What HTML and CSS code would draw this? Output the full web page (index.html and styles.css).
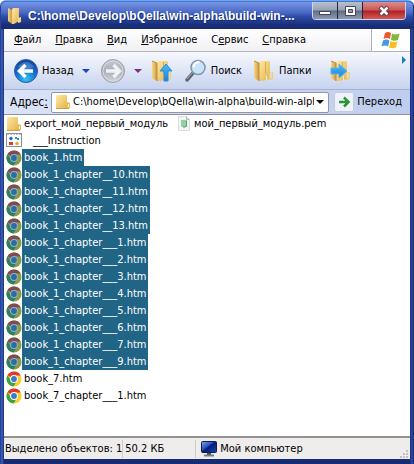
FILE: index.html
```html
<!DOCTYPE html>
<html lang="ru">
<head>
<meta charset="utf-8">
<title>C:\home\Develop\bQella\win-alpha\build-win-...</title>
<link rel="stylesheet" href="styles.css">
</head>
<body>
<svg class="defs" aria-hidden="true">
  <defs>
    <linearGradient id="gold" x1="0" y1="0" x2="1" y2="1"><stop offset="0" stop-color="#ffe9a3"/><stop offset="1" stop-color="#e3b34d"/></linearGradient>
    <linearGradient id="goldDark" x1="0" y1="0" x2="1" y2="0"><stop offset="0" stop-color="#f8d981"/><stop offset="1" stop-color="#c99a45"/></linearGradient>
    <radialGradient id="blue" cx=".5" cy=".85" r=".85"><stop offset="0" stop-color="#35c3f5"/><stop offset=".5" stop-color="#1674cf"/><stop offset="1" stop-color="#123f9c"/></radialGradient>
    <linearGradient id="grey" x1="0" y1="0" x2="0" y2="1"><stop offset="0" stop-color="#c9ccd3"/><stop offset=".5" stop-color="#a9adb5"/><stop offset="1" stop-color="#d5d8de"/></linearGradient>
    <linearGradient id="sky" x1="0" y1="0" x2="0" y2="1"><stop offset="0" stop-color="#52baf7"/><stop offset="1" stop-color="#1683d8"/></linearGradient>
    <linearGradient id="screen" x1="0" y1="0" x2="1" y2="1"><stop offset="0" stop-color="#7fa6ee"/><stop offset=".4" stop-color="#2a55c4"/><stop offset=".5" stop-color="#08197a"/><stop offset="1" stop-color="#1c49b5"/></linearGradient>
    <symbol id="folder" viewBox="0 0 16 16">
      <path d="M1 2q0-1 1-1h9q1 0 1 1v13H2q-1 0-1-1z" fill="url(#gold)"/>
      <path d="M12 8l3 1v5l-3 1z" fill="#e6bb58"/>
      <path d="M13 10h1v3h-1z" fill="#fff8dc"/>
      <path d="M1 14.500h13" stroke="#cda04b"/>
    </symbol>
    <symbol id="open-folder" viewBox="0 0 24 24">
      <path d="M2 2l5 2v18l-5-3z" fill="url(#goldDark)"/>
      <path d="M7 4l1-2h9l1 1v17l-8 2H7z" fill="url(#gold)"/>
      <path d="M2 2l5 2v18" fill="none" stroke="#bd8d3c"/>
      <path d="M13.500 3v12" stroke="#dcae53"/>
      <path d="M17 14l4-1v7l-4 1z" fill="#efcb72"/>
      <path d="M14.500 17v4M19 14v5" stroke="#d5f0fb"/>
    </symbol>
    <symbol id="chrome" viewBox="0 0 16 16">
      <circle cx="8" cy="8" r="7.500" fill="#f7cf27"/>
      <path d="M8 8L1.500 4.250A7.500 7.500 0 0 1 14.700 4.600H8z" fill="#e1392d"/>
      <path d="M1.500 4.250A7.500 7.500 0 0 0 7.500 15.500L11 9.700 8 8 5 9.700z" fill="#35a44a"/>
      <circle cx="8" cy="8" r="3.900" fill="#fff"/>
      <circle cx="8" cy="8" r="2.900" fill="#3c79c9"/>
    </symbol>
    <symbol id="chrome-selected" viewBox="0 0 16 16">
      <circle cx="8" cy="8" r="7.500" fill="#8b9a45"/>
      <path d="M8 8L1.500 4.250A7.500 7.500 0 0 1 14.700 4.600H8z" fill="#804b50"/>
      <path d="M1.500 4.250A7.500 7.500 0 0 0 7.500 15.500L11 9.700 8 8 5 9.700z" fill="#2b8060"/>
      <circle cx="8" cy="8" r="3.900" fill="#91b3c5"/>
      <circle cx="8" cy="8" r="2.900" fill="#2b6ca8"/>
    </symbol>
  </defs>
</svg>
<div class="window">
  <header class="title">
    <svg class="title-icon" viewBox="0 0 16 20"><path d="M2 2l4 2v14l-4-3z" fill="url(#goldDark)"/><path d="M6 4l1-2h6v13l-5 3-2 0z" fill="url(#gold)"/><path d="M12 12l3-1v5l-3 1z" fill="#f3d78b"/></svg>
    <h1>C:\home\Develop\bQella\win-alpha\build-win-...</h1>
    <div class="caption">
      <button type="button" aria-label="Свернуть"><svg viewBox="0 0 24 16"><rect x="6.500" y="8.500" width="11" height="3" fill="#fff" stroke="#424656"/></svg></button>
      <button type="button" aria-label="Развернуть"><svg viewBox="0 0 24 16"><path d="M7.500 3.500h10v9h-10z" fill="#fff" stroke="#424656"/><path d="M10.500 6.500h4v3h-4z" fill="#8d9db5" stroke="#424656"/></svg></button>
      <button type="button" class="close" aria-label="Закрыть"><svg viewBox="0 0 32 16"><path d="M12 4l8 8M20 4l-8 8" stroke="#5b3340" stroke-width="4.500"/><path d="M12.500 4.500l7 7M19.500 4.500l-7 7" stroke="#fff" stroke-width="2.500"/></svg></button>
    </div>
  </header>
  <main class="content">
    <nav class="menu">
      <a href="#"><u>Ф</u>айл</a>
      <a href="#"><u>П</u>равка</a>
      <a href="#"><u>В</u>ид</a>
      <a href="#"><u>И</u>збранное</a>
      <a href="#">С<u>е</u>рвис</a>
      <a href="#"><u>С</u>правка</a>
      <span class="brand"><svg viewBox="0 0 20 18">
        <path d="M4 2q3-2 6 0L9 8Q6 6 2.500 8z" fill="#ee5a25"/>
        <path d="M11 2.500q3 2 7.500 0L17 9q-4 1.500-7 0z" fill="#83b93b"/>
        <path d="M2 9.500q3-2 6.500 0L7 15.500q-3-2-6.500 0z" fill="#4298e6"/>
        <path d="M9.500 10q3 2 7 0.500L15 16.500q-4 1.500-7 0z" fill="#f7bf22"/>
      </svg></span>
    </nav>
    <div class="toolbar">
      <button type="button" class="tool back"><svg class="round" viewBox="0 0 26 26"><circle cx="13" cy="13" r="11.500" fill="url(#blue)" stroke="#2f5da5"/><path d="M5 9Q13-1 21 9 13 13 5 9z" fill="#fff" opacity=".2"/><path d="M12.500 7L6.500 13l6 6M7.500 13H20" fill="none" stroke="#fff" stroke-width="3.500"/></svg><span>Назад</span></button>
      <button type="button" class="drop" aria-label="История назад"><svg viewBox="0 0 8 6"><path d="M0 1h8L4 5z" fill="#1b43c8"/></svg></button>
      <button type="button" class="tool forward" aria-label="Вперед"><svg class="round" viewBox="0 0 26 26"><circle cx="13" cy="13" r="11.500" fill="url(#grey)" stroke="#9da1aa"/><circle cx="13" cy="13" r="10" fill="none" stroke="#d8dade"/><path d="M13.500 7l6 6-6 6M18.500 13H6" fill="none" stroke="#f0f2f5" stroke-width="3.500"/></svg></button>
      <button type="button" class="drop" aria-label="История вперед"><svg viewBox="0 0 8 6"><path d="M0 1h8L4 5z" fill="#803080"/></svg></button>
      <button type="button" class="tool up" aria-label="Вверх"><svg class="large" viewBox="0 0 24 24"><use href="#open-folder"/><path d="M16 5l6 7h-4v10h-4V12h-4z" fill="url(#sky)" stroke="#2a8ed8"/></svg></button>
      <button type="button" class="tool search"><svg class="large" viewBox="0 0 24 24"><path d="M9 14l-6 7" stroke="#62676f" stroke-width="3.500" stroke-linecap="round"/><path d="M9 13l-6 7" stroke="#a9adb4"/><circle cx="14" cy="8.500" r="7" fill="#c9e4f8" stroke="#8394ab" stroke-width="1.500"/><path d="M9.500 8q1-5 6-5" fill="none" stroke="#fff" stroke-width="2"/></svg><span>Поиск</span></button>
      <button type="button" class="tool folders"><svg class="large" viewBox="0 0 24 24"><use href="#open-folder"/></svg><span>Папки</span></button>
      <button type="button" class="tool sync" aria-label="Переместить"><svg class="large" viewBox="0 0 24 24"><use href="#open-folder"/><path d="M2 9h8V5l8 7-8 7v-4H2z" fill="url(#sky)" stroke="#5ab3ed"/></svg></button>
      <button type="button" class="more" aria-label="Еще"><svg viewBox="0 0 4 8"><path d="M0 0l4 4-4 4z" fill="#197cc9"/></svg></button>
    </div>
    <form class="address">
      <label for="path">Адрес<u>:</u></label>
      <div class="combo">
        <svg class="icon"><use href="#folder"/></svg>
        <input id="path" type="text" value="C:\home\Develop\bQella\win-alpha\build-win-alph">
        <button type="button" class="open" aria-label="Открыть список"><svg viewBox="0 0 8 6"><path d="M0 1h8L4 5z" fill="#111"/></svg></button>
      </div>
      <button type="button" class="go"><svg viewBox="0 0 20 20"><rect x=".5" y=".5" width="19" height="19" rx="2" fill="#eef3fb" stroke="#c3cbdc"/><path d="M5 10h9M10 5.500l4.500 4.500-4.500 4.500" fill="none" stroke="#2c9632" stroke-width="2.500"/></svg><span>Переход</span></button>
    </form>
    <ul class="files">
      <li><svg class="icon"><use href="#folder"/></svg><span>export_мой_первый_модуль</span></li>
      <li><svg class="icon" viewBox="0 0 16 16"><rect x=".5" y=".5" width="15" height="13" fill="#fff" stroke="#8b8f98"/><path d="M1 1.500h14" stroke="#b9c3d8" stroke-dasharray="2 1"/><circle cx="5" cy="5.500" r="1.700" fill="#2c5fd5"/><path d="M9 4h2v1h2v2h-2V6H9z" fill="#2b9aa8"/><path d="M3 9h4v3H3z" fill="#d8402b"/><circle cx="11" cy="10.500" r="1.700" fill="#e9a51d"/></svg><span class="indent">___Instruction</span></li>
      <li class="selected"><svg class="icon"><use href="#chrome-selected"/></svg><span>book_1.htm</span></li>
      <li class="selected"><svg class="icon"><use href="#chrome-selected"/></svg><span>book_1_chapter__10.htm</span></li>
      <li class="selected"><svg class="icon"><use href="#chrome-selected"/></svg><span>book_1_chapter__11.htm</span></li>
      <li class="selected"><svg class="icon"><use href="#chrome-selected"/></svg><span>book_1_chapter__12.htm</span></li>
      <li class="selected"><svg class="icon"><use href="#chrome-selected"/></svg><span>book_1_chapter__13.htm</span></li>
      <li class="selected"><svg class="icon"><use href="#chrome-selected"/></svg><span>book_1_chapter___1.htm</span></li>
      <li class="selected"><svg class="icon"><use href="#chrome-selected"/></svg><span>book_1_chapter___2.htm</span></li>
      <li class="selected"><svg class="icon"><use href="#chrome-selected"/></svg><span>book_1_chapter___3.htm</span></li>
      <li class="selected"><svg class="icon"><use href="#chrome-selected"/></svg><span>book_1_chapter___4.htm</span></li>
      <li class="selected"><svg class="icon"><use href="#chrome-selected"/></svg><span>book_1_chapter___5.htm</span></li>
      <li class="selected"><svg class="icon"><use href="#chrome-selected"/></svg><span>book_1_chapter___6.htm</span></li>
      <li class="selected"><svg class="icon"><use href="#chrome-selected"/></svg><span>book_1_chapter___7.htm</span></li>
      <li class="selected"><svg class="icon"><use href="#chrome-selected"/></svg><span>book_1_chapter___9.htm</span></li>
      <li><svg class="icon"><use href="#chrome"/></svg><span>book_7.htm</span></li>
      <li><svg class="icon"><use href="#chrome"/></svg><span>book_7_chapter___1.htm</span></li>
      <li><svg class="icon" viewBox="0 0 16 16"><path d="M2.500.5h8l3 3v11h-11z" fill="#f4f4f4" stroke="#dcdcdc"/><path d="M10.500.5v3h3" fill="#ddd" stroke="#bbb"/><path d="M5 4h6v6l-1 1H6L5 10z" fill="#8fd3a3"/><path d="M10.500 5v5l-1 1H7" fill="none" stroke="#4e9d73"/></svg><span>мой_первый_модуль.pem</span></li>
    </ul>
    <footer class="status">
      <span class="count">Выделено объектов: 1</span>
      <span class="size">50.2 КБ</span>
      <span class="place"><svg class="icon" viewBox="0 0 16 16"><path d="M6 11h4v3H6z" fill="#444a58"/><path d="M3 14.500h10" stroke="#777f8e" stroke-width="2"/><rect x=".5" y=".5" width="15" height="11" rx="1" fill="url(#screen)" stroke="#131d40"/></svg>Мой компьютер</span>
      <svg class="grip" viewBox="0 0 9 9"><path d="M6 0h2v2H6zM3 3h2v2H3zM6 3h2v2H6zM0 6h2v2H0zM3 6h2v2H3zM6 6h2v2H6z" fill="#c4c0c0"/></svg>
    </footer>
  </main>
</div>
</body>
</html>
```
FILE: styles.css
```css
* { box-sizing: border-box; }

body {
  margin: 0;
  background: #fff;
  color: #000;
  font: 11px/16px "DejaVu Sans Condensed", "DejaVu Sans", sans-serif;
}

button, input { font: inherit; color: inherit; }
button { display: flex; align-items: center; padding: 0; border: 0; background: none; }
svg { display: block; flex: none; }
.defs { width: 0; height: 0; position: absolute; }
.icon { width: 16px; height: 16px; }

.window {
  display: flex;
  flex-direction: column;
  min-height: 100vh;
  padding: 0 4px 5px;
  border-top: 1px solid #69a9f8;
  border-radius: 6px 6px 0 0;
  background: linear-gradient(90deg, #1c3a91, #3f61b7 2px, #172c75 4px, #172c75 calc(100% - 4px), #2a4ca6 calc(100% - 2px), #142768);
}

.title {
  display: flex;
  align-items: center;
  height: 28px;
  margin: 0 -3px;
  padding: 0 7px 0 5px;
  border-top: 1px solid #4775cc;
  border-radius: 5px 5px 0 0;
  background: linear-gradient(#7995e4, #4868c4 40%, #2c4ba4 55%, #1a2f7b 85%, #182a6c);
}
.title-icon { width: 16px; height: 20px; }
.title h1 {
  flex: 1;
  margin: 0 0 0 6px;
  overflow: hidden;
  color: #fff;
  font: bold 12px/16px "Liberation Sans", sans-serif;
  white-space: nowrap;
  text-shadow: 1px 1px #172b70;
}
.caption {
  display: flex;
  align-self: flex-start;
  height: 18px;
  border: 1px solid #c9d6ee;
  border-top: 0;
  border-radius: 0 0 4px 4px;
  overflow: hidden;
}
.caption button {
  width: 25px;
  justify-content: center;
  border-right: 1px solid #20253a;
  background: linear-gradient(#b9c0cf, #98a2b5 48%, #606b83 52%, #8f9bb1);
}
.caption button svg { width: 24px; height: 16px; }
.caption .close { width: 42px; border: 0; background: linear-gradient(#dc8d8c, #cc5656 48%, #ac2024 52%, #d75a54); }
.caption .close svg { width: 32px; }

.content { display: flex; flex: 1; flex-direction: column; min-width: 0; background: #fff; }

.menu {
  display: flex;
  align-items: center;
  gap: 14px;
  height: 23px;
  padding-left: 10px;
  border-bottom: 1px solid #b5b2b4;
  background: linear-gradient(#fff, #f1f0f4);
}
.menu a { color: inherit; text-decoration: none; }
.brand {
  display: flex;
  align-self: stretch;
  align-items: center;
  justify-content: center;
  width: 39px;
  margin-left: auto;
  border-left: 1px solid #b5b2b4;
  background: #fff;
}
.brand svg { width: 20px; height: 18px; }

.toolbar {
  display: flex;
  align-items: center;
  height: 38px;
  padding: 0 4px 0 9px;
  border-bottom: 1px solid #a9b4cf;
  background: linear-gradient(#f6f8fe, #dfe6f6 50%, #c6d2ee);
}
.tool { gap: 3px; }
.round { width: 26px; height: 26px; }
.large { width: 24px; height: 24px; }
.drop { width: 8px; margin-left: 8px; }
.drop svg, .open svg { width: 8px; height: 6px; }
.forward { margin-left: 10px; }
.up { margin-left: 8px; }
.search { margin-left: 10px; }
.folders { margin-left: 10px; }
.sync { margin-left: 18px; }
.more { align-self: flex-start; margin: 4px 0 0 auto; }
.more svg { width: 4px; height: 8px; }

.address {
  display: flex;
  align-items: center;
  height: 25px;
  margin: 0;
  padding: 0 8px 0 6px;
  border-bottom: 1px solid #8d929e;
  background: linear-gradient(90deg, #dae3f7, #bfcdee);
}
.address label { width: 41px; font-size: 12px; }
.combo {
  display: flex;
  flex: 1;
  align-items: center;
  min-width: 0;
  height: 21px;
  padding: 0 4px 0 3px;
  border: 1px solid #9098a8;
  border-radius: 2px;
  background: #fff;
}
.combo input { flex: 1; min-width: 0; margin: 0 2px; padding: 0; border: 0; outline: 0; background: none; }
.go { gap: 3px; margin-left: 5px; }
.go svg { width: 20px; height: 20px; }

.files {
  display: grid;
  flex: 1;
  grid-template-rows: repeat(17, 17px);
  grid-template-columns: 170px;
  grid-auto-flow: column;
  align-content: start;
  margin: 0;
  padding: 0 2px;
  list-style: none;
}
.files li { display: flex; align-items: center; height: 17px; white-space: nowrap; }
.files span { padding: 0 2px; line-height: 17px; }
.files .indent { padding-left: 11px; }
.selected span { color: #fff; background: #206486; }

.status {
  display: flex;
  align-items: center;
  height: 23px;
  border-top: 2px solid #949092;
  background: #efecec;
}
.status > span { height: 18px; line-height: 18px; white-space: nowrap; }
.count { padding-left: 1px; border-right: 1px solid #d0cccc; }
.size { width: 73px; padding-left: 2px; border-right: 1px solid #d0cccc; }
.place { display: flex; flex: 1; align-items: center; gap: 3px; padding-left: 5px; }
.grip { align-self: flex-end; width: 9px; height: 9px; margin-right: 1px; }
```
